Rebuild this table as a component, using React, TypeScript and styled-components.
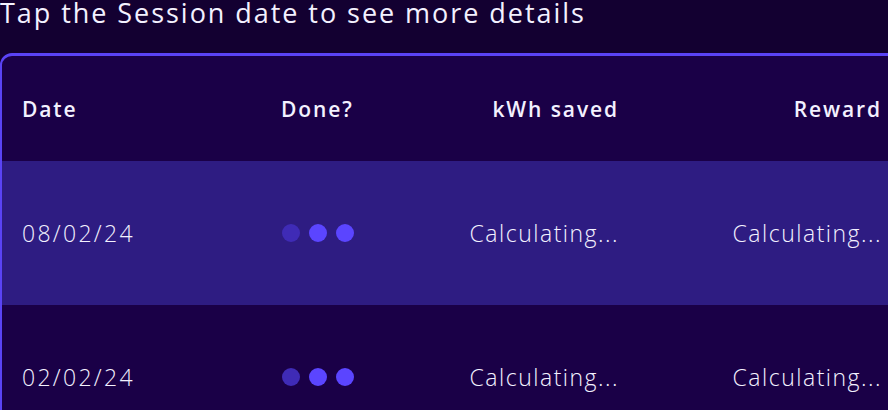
import React from 'react';
import styled, { createGlobalStyle } from 'styled-components';

interface Session {
  date: string;
  kwh: string;
  reward: string;
}

const GlobalStyle = createGlobalStyle`
  html, body {
    margin: 0;
    padding: 0;
    background: #130031;
    overflow: hidden;
  }
  body {
    font-family: "Open Sans", "Liberation Sans", sans-serif;
    color: #f3f1ff;
  }
`;

const Page = styled.div`
  width: 888px;
  height: 410px;
  overflow: hidden;
`;

const Title = styled.h2`
  margin: 0;
  padding-top: 1px;
  font-size: 27px;
  line-height: 24px;
  font-weight: 400;
  letter-spacing: 1.95px;
`;

const Card = styled.div`
  margin-top: 28px;
  width: 900px;
  background: #1a0047;
  border: 2px solid #5a43f5;
  border-top-width: 3px;
  border-radius: 12px;
  overflow: hidden;
`;

const Row = styled.div<{ $head?: boolean; $active?: boolean }>`
  display: grid;
  grid-template-columns: 259px 139px 197px 1fr;
  align-items: center;
  padding: 0 22px 0 20px;
  height: ${props => (props.$head ? 105 : 144)}px;
  background: ${props => (props.$active ? '#2e1c82' : 'transparent')};
  font-size: ${props => (props.$head ? 21 : 23)}px;
  font-weight: ${props => (props.$head ? 550 : 300)};
  letter-spacing: ${props => (props.$head ? 1.9 : 1.5)}px;
`;

const Cell = styled.div<{ $right?: boolean; $wide?: boolean }>`
  text-align: ${props => (props.$right ? 'right' : 'left')};
  white-space: nowrap;
  ${props => props.$right && 'margin-right: -2px;'}
  ${props => props.$wide && 'letter-spacing: 2.3px;'}
`;

const Dots = styled.div`
  display: flex;
  gap: 9px;
  padding-left: 1px;
`;

const Dot = styled.span<{ $dim?: boolean }>`
  width: 18px;
  height: 18px;
  border-radius: 50%;
  background: ${props => (props.$dim ? '#3f2bb6' : '#5b45ff')};
`;

const sessions: Session[] = [
  { date: '08/02/24', kwh: 'Calculating...', reward: 'Calculating...' },
  { date: '02/02/24', kwh: 'Calculating...', reward: 'Calculating...' },
];

function App() {
  return (
    <Page>
      <GlobalStyle />
      <Title>Tap the Session date to see more details</Title>
      <Card>
        <Row $head>
          <Cell>Date</Cell>
          <Cell>Done?</Cell>
          <Cell $right>kWh saved</Cell>
          <Cell $right>Reward</Cell>
        </Row>
        {sessions.map((s, i) => (
          <Row key={s.date} $active={i === 0}>
            <Cell $wide>{s.date}</Cell>
            <Cell>
              <Dots>
                <Dot $dim />
                <Dot />
                <Dot />
              </Dots>
            </Cell>
            <Cell $right>{s.kwh}</Cell>
            <Cell $right>{s.reward}</Cell>
          </Row>
        ))}
      </Card>
    </Page>
  );
}

export default App;
